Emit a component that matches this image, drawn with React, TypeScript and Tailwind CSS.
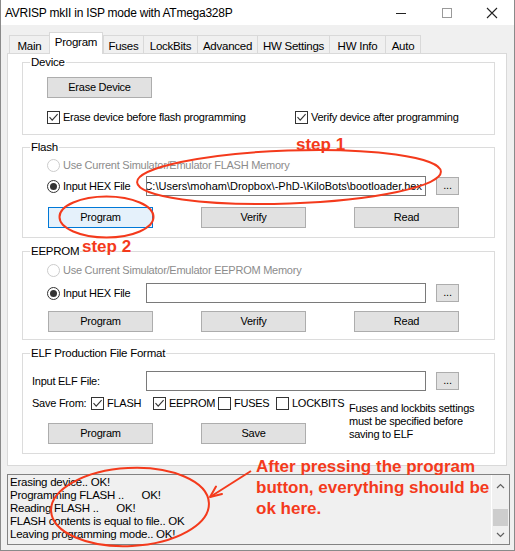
import React from "react";

const RED = "#f43a1c";

function Radio({ checked, disabled }: { checked?: boolean; disabled?: boolean }) {
  return (
    <span
      className={`w-[13px] h-[13px] shrink-0 rounded-full border bg-white flex items-center justify-center ${
        disabled ? "border-[#cccccc]" : "border-[#333333]"
      }`}
    >
      {checked && <span className="w-[7px] h-[7px] rounded-full bg-[#333333]" />}
    </span>
  );
}

function Check({ checked }: { checked?: boolean }) {
  return (
    <span className="w-[13px] h-[13px] shrink-0 border border-[#333333] bg-white flex items-center justify-center">
      {checked && (
        <svg width="11" height="11" viewBox="0 0 11 11">
          <path d="M1.5 5.2 L4.2 8.2 L9.6 2.2" stroke="#333333" strokeWidth="1.1" fill="none" />
        </svg>
      )}
    </span>
  );
}

function Btn({ children, active }: { children: React.ReactNode; active?: boolean }) {
  return (
    <div
      className={`w-[105px] h-[21px] border flex items-center justify-center text-[11px] text-black ${
        active ? "bg-[#e5f1fb] border-[#0078d7]" : "bg-[#e1e1e1] border-[#adadad]"
      }`}
    >
      {children}
    </div>
  );
}

function Dots() {
  return (
    <div className="w-[23px] h-[18px] ml-[10px] border border-[#adadad] bg-[#e1e1e1] flex items-center justify-center text-[11px] leading-none pb-[2px]">
      ...
    </div>
  );
}

function TextBox({ value }: { value?: string }) {
  return (
    <div className="w-[280px] h-[20px] border border-[#7a7a7a] bg-white flex items-center justify-end overflow-hidden whitespace-nowrap text-[11px] tracking-normal pr-[3px]">
      {value}
    </div>
  );
}

function Group({
  label,
  className,
  children,
}: {
  label: string;
  className: string;
  children: React.ReactNode;
}) {
  return (
    <div className={`relative ml-[14px] w-[473px] border border-[#dcdcdc] ${className}`}>
      <span className="absolute -top-[8px] left-[7px] px-[1px] bg-white text-[11.5px] leading-[14px] whitespace-nowrap">
        {label}
      </span>
      {children}
    </div>
  );
}

function ButtonRow({ a, b, c, activeFirst, className }: { a: string; b: string; c: string; activeFirst?: boolean; className: string }) {
  return (
    <div className={`flex gap-[48px] pl-[25px] ${className}`}>
      <Btn active={activeFirst}>{a}</Btn>
      <Btn>{b}</Btn>
      <Btn>{c}</Btn>
    </div>
  );
}

const tabs: { name: string; w: string; selected?: boolean }[] = [
  { name: "Main", w: "w-[40px]" },
  { name: "Program", w: "w-[54px]", selected: true },
  { name: "Fuses", w: "w-[40px]" },
  { name: "LockBits", w: "w-[54px]" },
  { name: "Advanced", w: "w-[60px]" },
  { name: "HW Settings", w: "w-[72px]" },
  { name: "HW Info", w: "w-[56px]" },
  { name: "Auto", w: "w-[36px]" },
];

export default function App() {
  return (
    <div className="relative w-[515px] h-[551px] overflow-hidden bg-[#f0f0f0] border-l border-r border-b border-[#8a8a8a] font-['Liberation_Sans',Arial,sans-serif] tracking-[-0.25px] text-black">
      {/* title bar */}
      <div className="h-[25px] bg-white flex items-center">
        <span className="pl-[4px] text-[12px] whitespace-nowrap">AVRISP mkII in ISP mode with ATmega328P</span>
        <div className="ml-auto flex items-center h-full">
          <svg width="12" height="12" viewBox="0 0 12 12" className="mr-[34px]">
            <path d="M1 6.5 H11" stroke="#222" strokeWidth="1" />
          </svg>
          <svg width="12" height="12" viewBox="0 0 12 12" className="mr-[33px]">
            <rect x="1.5" y="1.5" width="9" height="9" stroke="#9a9a9a" fill="none" strokeWidth="1" />
          </svg>
          <svg width="12" height="12" viewBox="0 0 12 12" className="mr-[16px]">
            <path d="M1 1 L11 11 M11 1 L1 11" stroke="#222" strokeWidth="1.1" />
          </svg>
        </div>
      </div>

      {/* tabs */}
      <div className="relative z-10 mt-[7px] -mb-px ml-[8px] flex items-end h-[22px]">
        {tabs.map((t, i) =>
          t.selected ? (
            <div
              key={t.name}
              className={`${t.w} h-[22px] bg-white border-l border-t border-r border-[#d9d9d9] flex items-start justify-center pt-[2px] text-[11.5px] leading-[14px]`}
            >
              {t.name}
            </div>
          ) : (
            <div
              key={t.name}
              className={`${t.w} h-[19px] bg-[#f0f0f0] border-t border-b border-[#d9d9d9] ${
                i === tabs.length - 1 ? "border-r" : ""
              } ${i === 0 ? "border-l" : ""} ${i > 1 ? "border-l" : ""} flex items-start justify-center pt-[3px] text-[11.5px] leading-[14px]`}
            >
              {t.name}
            </div>
          )
        )}
      </div>

      {/* tab panel */}
      <div className="ml-[6px] w-[500px] h-[413px] bg-white border border-[#d9d9d9] pt-[8px] text-[11px]">
        <Group label="Device" className="h-[73px]">
          <div className="pl-[24px] pt-[14px]">
            <div className="flex">
              <Btn>Erase Device</Btn>
            </div>
            <div className="flex items-center mt-[13px] h-[13px]">
              <div className="w-[248px] flex items-center gap-[3px]">
                <Check checked />
                <span className="whitespace-nowrap">Erase device before flash programming</span>
              </div>
              <div className="flex items-center gap-[3px]">
                <Check checked />
                <span className="whitespace-nowrap">Verify device after programming</span>
              </div>
            </div>
          </div>
        </Group>

        <Group label="Flash" className="h-[91px] mt-[12px]">
          <div className="pl-[24px] pt-[11px] flex items-center gap-[3px] h-[24px]">
            <Radio disabled />
            <span className="text-[#8c8c8c] whitespace-nowrap">Use Current Simulator/Emulator FLASH Memory</span>
          </div>
          <div className="pl-[24px] mt-[4px] flex items-center h-[20px]">
            <div className="w-[99px] flex items-center gap-[3px]">
              <Radio checked />
              <span className="whitespace-nowrap">Input HEX File</span>
            </div>
            <TextBox value="C:\Users\moham\Dropbox\-PhD-\KiloBots\bootloader.hex" />
            <Dots />
          </div>
          <ButtonRow a="Program" b="Verify" c="Read" activeFirst className="mt-[11px]" />
        </Group>

        <Group label="EEPROM" className="h-[89px] mt-[13px]">
          <div className="pl-[24px] pt-[12px] flex items-center gap-[3px] h-[25px]">
            <Radio disabled />
            <span className="text-[#8c8c8c] whitespace-nowrap">Use Current Simulator/Emulator EEPROM Memory</span>
          </div>
          <div className="pl-[24px] mt-[6px] flex items-center h-[20px]">
            <div className="w-[99px] flex items-center gap-[3px]">
              <Radio checked />
              <span className="whitespace-nowrap">Input HEX File</span>
            </div>
            <TextBox />
            <Dots />
          </div>
          <ButtonRow a="Program" b="Verify" c="Read" className="mt-[8px]" />
        </Group>

        <Group label="ELF Production File Format" className="h-[101px] mt-[13px]">
          <div className="pl-[9px] mt-[17px] flex items-center h-[20px]">
            <span className="w-[114px] whitespace-nowrap">Input ELF File:</span>
            <TextBox />
            <Dots />
          </div>
          <div className="flex mt-[5px]">
            <div className="w-[326px] shrink-0">
              <div className="flex items-center h-[14px] pl-[9px]">
                <span className="w-[59px] whitespace-nowrap">Save From:</span>
                <div className="w-[62px] flex items-center gap-[3px]">
                  <Check checked />
                  <span>FLASH</span>
                </div>
                <div className="w-[65px] flex items-center gap-[3px]">
                  <Check checked />
                  <span>EEPROM</span>
                </div>
                <div className="w-[58px] flex items-center gap-[3px]">
                  <Check />
                  <span>FUSES</span>
                </div>
                <div className="flex items-center gap-[3px]">
                  <Check />
                  <span>LOCKBITS</span>
                </div>
              </div>
              <div className="flex gap-[48px] pl-[25px] mt-[13px]">
                <Btn>Program</Btn>
                <Btn>Save</Btn>
              </div>
            </div>
            <div className="pt-[6px] leading-[13px] whitespace-nowrap">
              <div>Fuses and lockbits settings</div>
              <div>must be specified before</div>
              <div>saving to ELF</div>
            </div>
          </div>
        </Group>
      </div>

      {/* log box */}
      <div className="ml-[6px] mt-[8px] w-[503px] h-[71px] border border-[#828282] bg-[#f0f0f0] flex">
        <div className="flex-1 pl-[2px] pt-[1px] text-[11.5px] leading-[13px] whitespace-pre">
          <div>Erasing device.. OK!</div>
          <div>{"Programming FLASH ..      OK!"}</div>
          <div>{"Reading FLASH ..      OK!"}</div>
          <div>FLASH contents is equal to file.. OK</div>
          <div>Leaving programming mode.. OK!</div>
        </div>
        <div className="w-[18px] border-l border-white flex flex-col items-center">
          <svg width="9" height="6" viewBox="0 0 9 6" className="mt-[8px]">
            <path d="M1 5 L4.5 1.5 L8 5" stroke="#606060" strokeWidth="1.2" fill="none" />
          </svg>
          <div className="w-[15px] h-[17px] bg-[#cdcdcd] mt-[20px]" />
          <svg width="9" height="6" viewBox="0 0 9 6" className="mt-[6px]">
            <path d="M1 1 L4.5 4.5 L8 1" stroke="#606060" strokeWidth="1.2" fill="none" />
          </svg>
        </div>
      </div>

      {/* annotations overlay */}
      <svg className="absolute left-0 top-0 pointer-events-none" width="515" height="551" viewBox="0 0 515 551">
        <ellipse cx="288" cy="177" rx="152" ry="26.5" transform="rotate(-2 288 177)" fill="none" stroke={RED} strokeWidth="2" />
        <ellipse cx="105.5" cy="217" rx="47" ry="20.5" fill="none" stroke={RED} strokeWidth="2" />
        <ellipse cx="129" cy="507" rx="79" ry="39" transform="rotate(-3 129 507)" fill="none" stroke={RED} strokeWidth="2" />
        <path d="M250 471 L209 497" stroke={RED} strokeWidth="2" fill="none" />
        <path d="M209 497 L221 494 M209 497 L215 486.5" stroke={RED} strokeWidth="2" fill="none" strokeLinecap="round" />
      </svg>
      <div className="absolute left-[295px] top-[136px] text-[17px] leading-[17px] font-bold tracking-normal text-[#f43a1c] whitespace-nowrap pointer-events-none">
        step 1
      </div>
      <div className="absolute left-[81px] top-[238px] text-[17px] leading-[17px] font-bold tracking-normal text-[#f43a1c] whitespace-nowrap pointer-events-none">
        step 2
      </div>
      <div className="absolute left-[255px] top-[456px] text-[17px] leading-[21px] font-bold tracking-normal text-[#f43a1c] whitespace-nowrap pointer-events-none">
        <div>After pressing the program</div>
        <div>button, everything should be</div>
        <div>ok here.</div>
      </div>
    </div>
  );
}
